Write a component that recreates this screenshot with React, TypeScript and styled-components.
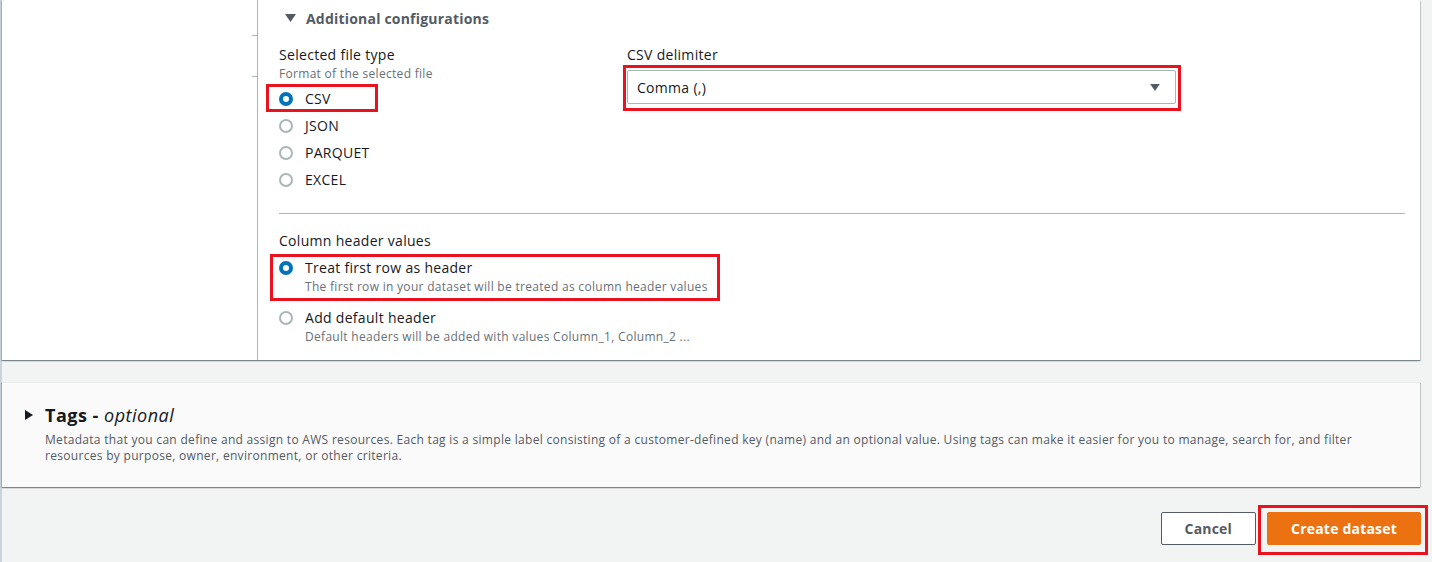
import React from 'react';
import styled, { createGlobalStyle } from 'styled-components';

const GlobalStyle = createGlobalStyle`
  html, body {
    margin: 0;
    padding: 0;
    background: #f2f3f3;
  }
  body {
    font-family: "Open Sans", "Noto Sans", Arial, sans-serif;
    letter-spacing: 0.3px;
    color: #16191f;
  }
  *, *::before, *::after {
    box-sizing: border-box;
  }
`;

const Page = styled.div`
  min-height: 562px;
  border-left: 2px solid #c9d4df;
  display: flex;
  flex-direction: column;
`;

const Card = styled.div<{ $muted?: boolean }>`
  width: 1418px;
  background: ${(p) => (p.$muted ? '#fafafa' : '#ffffff')};
  border-top: ${(p) => (p.$muted ? '1px solid #eaeded' : 'none')};
  box-shadow: 0 1px 1px 0 rgba(0, 28, 36, 0.3), 1px 1px 1px 0 rgba(0, 28, 36, 0.15),
    -1px 1px 1px 0 rgba(0, 28, 36, 0.15);
`;

const ConfigCard = styled(Card)`
  display: flex;
`;

const Rail = styled.div`
  width: 256px;
  flex-shrink: 0;
  border-right: 1px solid #aab7b8;
  display: flex;
  flex-direction: column;
  align-items: flex-end;
`;

const Tick = styled.div<{ $gap: number }>`
  width: 5px;
  height: 1px;
  background: #aab7b8;
  margin-top: ${(p) => p.$gap}px;
`;

const Content = styled.div`
  flex: 1;
  padding: 8px 15px 15px 21px;
`;

const ExpandHeader = styled.div`
  display: flex;
  align-items: center;
  gap: 10px;
  height: 20px;
  padding-left: 6px;
  font-size: 14px;
  font-weight: 700;
  letter-spacing: 0.2px;
  color: #545b64;
`;

const FieldsGrid = styled.div`
  display: grid;
  grid-template-columns: 348px 1fr;
  margin-top: 17px;
`;

const Field = styled.div`
  display: flex;
  flex-direction: column;
  align-items: flex-start;
`;

const Label = styled.div`
  font-size: 14px;
  line-height: 20px;
  color: #16191f;
`;

const Hint = styled.div`
  font-size: 12px;
  line-height: 16px;
  color: #687078;
  margin-top: 1px;
`;

const RadioList = styled.div<{ $gap: number; $top: number }>`
  display: flex;
  flex-direction: column;
  align-items: flex-start;
  gap: ${(p) => p.$gap}px;
  margin-top: ${(p) => p.$top}px;
`;

const Highlight = styled.div<{ $inset: string; $width?: number }>`
  position: relative;
  display: inline-flex;
  &::after {
    content: '';
    position: absolute;
    inset: ${(p) => p.$inset};
    ${(p) => (p.$width ? `width: ${p.$width}px;` : '')}
    border: 3px solid #e8131e;
    pointer-events: none;
  }
`;

const RadioRow = styled.div`
  display: flex;
  align-items: flex-start;
  gap: 12px;
  height: 24px;
  padding-top: 5px;
`;

const Circle = styled.span<{ $on?: boolean }>`
  width: 14px;
  height: 14px;
  border-radius: 50%;
  flex-shrink: 0;
  background: #ffffff;
  border: ${(p) => (p.$on ? '4px solid #0073bb' : '2px solid #aab7b8')};
`;

const OptionRow = styled.div`
  display: flex;
  align-items: flex-start;
  gap: 12px;
  & > ${Circle} {
    margin-top: 3px;
  }
`;

const OptionText = styled.div`
  display: flex;
  flex-direction: column;
`;

const RadioLabel = styled.span`
  font-size: 14px;
  line-height: 14px;
  color: #16191f;
`;

const OptionTitle = styled.div`
  font-size: 14px;
  line-height: 20px;
  color: #16191f;
`;

const OptionDesc = styled.div`
  font-size: 12px;
  line-height: 16px;
  color: #687078;
  margin-top: 1px;
`;

const Select = styled.div`
  margin-top: 5px;
  width: 549px;
  height: 34px;
  border: 1px solid #aab7b8;
  border-radius: 2px;
  background: #ffffff;
  display: flex;
  align-items: center;
  justify-content: space-between;
  padding: 0 15px 0 9px;
  font-size: 14px;
  color: #16191f;
`;

const Divider = styled.div`
  height: 1px;
  background: #aab7b8;
  margin-top: 21px;
`;

const Section = styled.div`
  margin-top: 17px;
`;

const TagsCard = styled(Card)`
  margin-top: 22px;
  padding: 20px 52px 23px 23px;
`;

const TagsTitle = styled.div`
  display: flex;
  align-items: center;
  gap: 12px;
  height: 24px;
  font-size: 18px;
  font-weight: 700;
  letter-spacing: 0.5px;
  color: #16191f;
  em {
    font-weight: 400;
    font-style: italic;
  }
`;

const TagsDesc = styled.div`
  margin: 5px 0 0 20px;
  font-size: 12px;
  line-height: 16px;
  color: #545b64;
`;

const Footer = styled.div`
  display: flex;
  justify-content: flex-end;
  align-items: center;
  gap: 11px;
  margin-top: 25px;
  padding-right: 11px;
`;

const Button = styled.button<{ $primary?: boolean }>`
  height: 33px;
  padding: 0 23px;
  border-radius: 2px;
  font-family: inherit;
  letter-spacing: 0.2px;
  font-size: 14px;
  font-weight: 700;
  cursor: pointer;
  border: 1px solid ${(p) => (p.$primary ? '#ec7211' : '#545b64')};
  background: ${(p) => (p.$primary ? '#ec7211' : '#ffffff')};
  color: ${(p) => (p.$primary ? '#ffffff' : '#545b64')};
`;

const CaretDown = ({ color = '#545b64', w = 11, h = 8 }: { color?: string; w?: number; h?: number }) => (
  <svg width={w} height={h} viewBox="0 0 11 8">
    <polygon points="0,0 11,0 5.5,8" fill={color} />
  </svg>
);

const CaretRight = () => (
  <svg width="8" height="10" viewBox="0 0 8 10">
    <polygon points="0,0 8,5 0,10" fill="#16191f" />
  </svg>
);

const fileTypes = ['CSV', 'JSON', 'PARQUET', 'EXCEL'];

export default function App() {
  return (
    <>
      <GlobalStyle />
      <Page>
        <ConfigCard>
          <Rail>
            <Tick $gap={35} />
            <Tick $gap={40} />
          </Rail>
          <Content>
            <ExpandHeader>
              <CaretDown />
              Additional configurations
            </ExpandHeader>

            <FieldsGrid>
              <Field>
                <Label>Selected file type</Label>
                <Hint>Format of the selected file</Hint>
                <RadioList $gap={3} $top={5}>
                  {fileTypes.map((t, i) =>
                    i === 0 ? (
                      <Highlight key={t} $inset="-3px auto -1px -13px" $width={112}>
                        <RadioRow>
                          <Circle $on />
                          <RadioLabel>{t}</RadioLabel>
                        </RadioRow>
                      </Highlight>
                    ) : (
                      <RadioRow key={t}>
                        <Circle />
                        <RadioLabel>{t}</RadioLabel>
                      </RadioRow>
                    )
                  )}
                </RadioList>
              </Field>
              <Field>
                <Label>CSV delimiter</Label>
                <Highlight $inset="0px -5px -7px -4px">
                  <Select>
                    Comma (,)
                    <CaretDown w={10} h={7} />
                  </Select>
                </Highlight>
              </Field>
            </FieldsGrid>

            <Divider />

            <Section>
              <Label>Column header values</Label>
              <RadioList $gap={13} $top={7}>
                <Highlight $inset="-4px -12px -6px -9px">
                  <OptionRow>
                    <Circle $on />
                    <OptionText>
                      <OptionTitle>Treat first row as header</OptionTitle>
                      <OptionDesc>The first row in your dataset will be treated as column header values</OptionDesc>
                    </OptionText>
                  </OptionRow>
                </Highlight>
                <OptionRow>
                  <Circle />
                  <OptionText>
                    <OptionTitle>Add default header</OptionTitle>
                    <OptionDesc>Default headers will be added with values Column_1, Column_2 ...</OptionDesc>
                  </OptionText>
                </OptionRow>
              </RadioList>
            </Section>
          </Content>
        </ConfigCard>

        <TagsCard $muted>
          <TagsTitle>
            <CaretRight />
            <span>
              Tags - <em>optional</em>
            </span>
          </TagsTitle>
          <TagsDesc>
            Metadata that you can define and assign to AWS resources. Each tag is a simple label consisting of a
            customer-defined key (name) and an optional value. Using tags can make it easier for you to manage, search
            for, and filter resources by purpose, owner, environment, or other criteria.
          </TagsDesc>
        </TagsCard>

        <Footer>
          <Button>Cancel</Button>
          <Highlight $inset="-7px -7px -10px -9px">
            <Button $primary>Create dataset</Button>
          </Highlight>
        </Footer>
      </Page>
    </>
  );
}
